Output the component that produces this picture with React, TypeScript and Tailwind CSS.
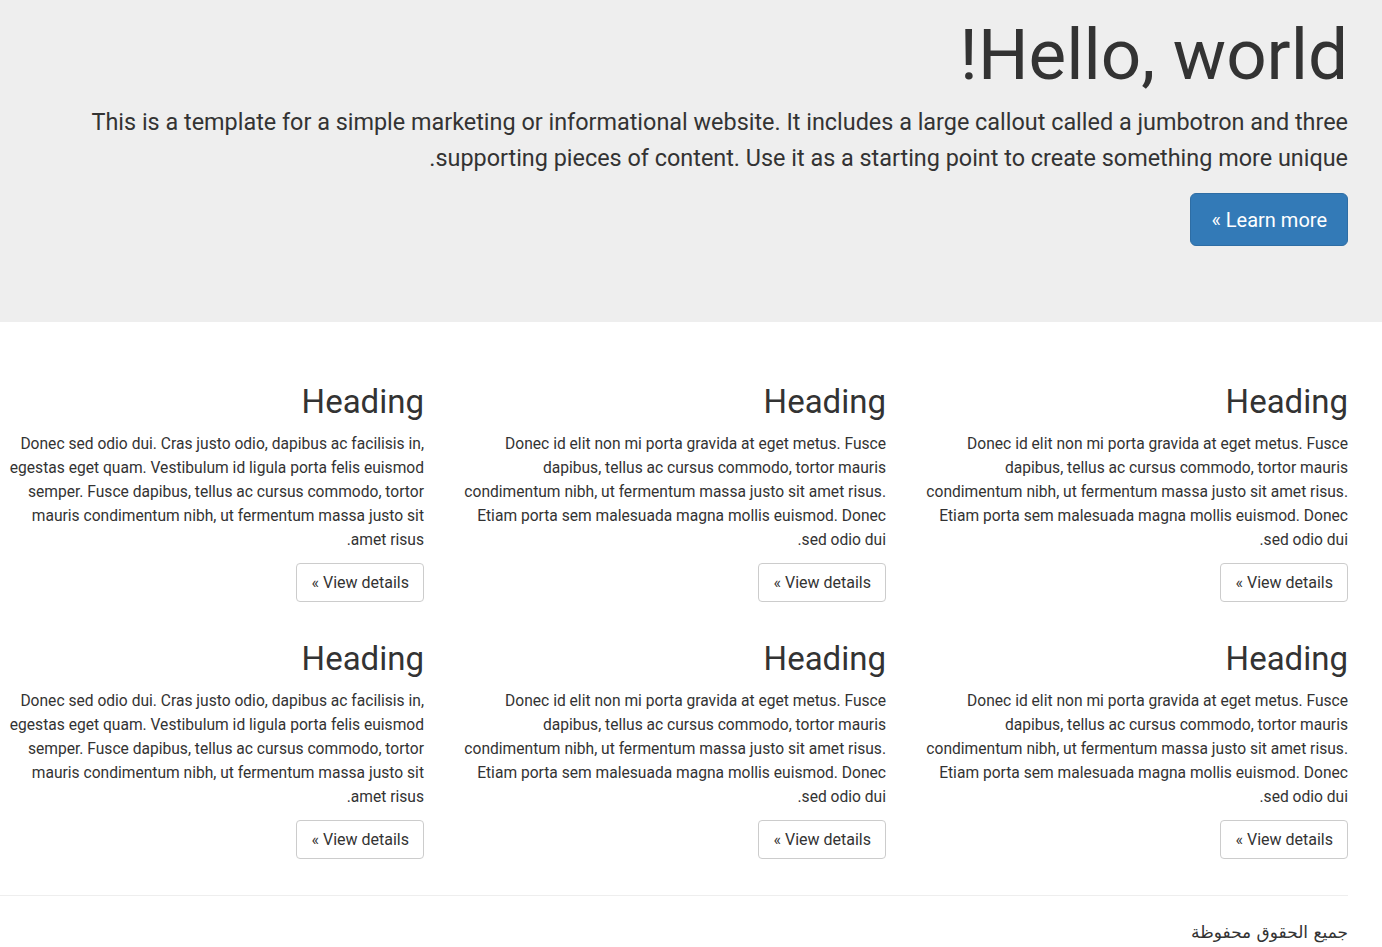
import React from 'react'

const textA =
  'Donec sed odio dui. Cras justo odio, dapibus ac facilisis in, egestas eget quam. Vestibulum id ligula porta felis euismod semper. Fusce dapibus, tellus ac cursus commodo, tortor mauris condimentum nibh, ut fermentum massa justo sit amet risus.'
const textB =
  'Donec id elit non mi porta gravida at eget metus. Fusce dapibus, tellus ac cursus commodo, tortor mauris condimentum nibh, ut fermentum massa justo sit amet risus. Etiam porta sem malesuada magna mollis euismod. Donec sed odio dui.'

const Card = ({ text }: { text: string }) => (
  <div className="flex flex-col items-start">
    <h2 className="text-[33px] leading-[40px] font-normal">Heading</h2>
    <p className="mt-[10px] w-[425px] text-[15.6px] leading-[24px]">{text}</p>
    <button className="mt-[11px] h-[39px] px-[14px] border border-[#ccc] rounded-[4px] bg-white text-[16px] text-[#333]">
      View details »
    </button>
  </div>
)

const App = () => {
  // right-to-left page: first child sits on the right
  const cards = [textB, textB, textA]

  return (
    <div dir="rtl" className="min-h-screen bg-white text-[#333] font-['Roboto',sans-serif]">
      {/* Jumbotron */}
      <div className="bg-[#eee] h-[322px] pr-[34px] pl-[34px] pt-[19px]">
        <h1 className="text-[71px] leading-[72px] font-normal">Hello, world!</h1>
        <p className="mt-[13px] text-[23.4px] leading-[36px]">
          This is a template for a simple marketing or informational website. It includes a large callout called a jumbotron and three supporting pieces of content. Use it as a starting point to create something more unique.
        </p>
        <button className="mt-[17px] h-[53px] px-[20px] rounded-[6px] bg-[#337ab7] border border-[#2e6da4] text-white text-[20px]">
          Learn more »
        </button>
      </div>

      {/* Columns */}
      <div className="pr-[34px] pt-[60px]">
        <div className="grid grid-cols-[436px_436px_436px] gap-x-[26px] gap-y-[37px]">
          {cards.concat(cards).map((t, i) => (
            <Card key={i} text={t} />
          ))}
        </div>
        <hr className="mt-[36px] border-t border-[#eee] w-[1348px]" />
        <footer className="pt-[24px] pb-[8px] text-[17px] font-['DejaVu_Sans',sans-serif]">
          <p>جميع الحقوق محفوظة</p>
        </footer>
      </div>
    </div>
  )
}

export default App
